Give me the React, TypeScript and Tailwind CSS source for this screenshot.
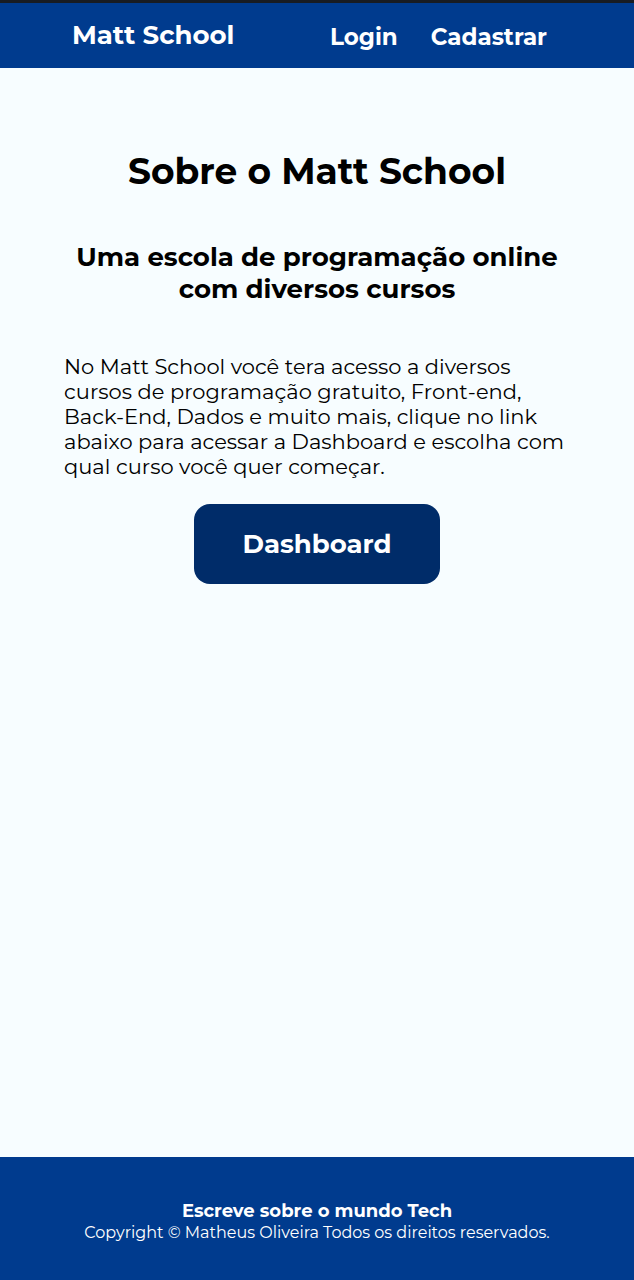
export default function App() {
  return (
    <div className="flex min-h-screen flex-col border-t-3 border-[#181c22] bg-[#f7fdff] font-[Montserrat,Inter,sans-serif] text-black">
      <header className="flex items-center justify-between bg-[#003b8e] py-4 pr-[87px] pl-[72px] font-bold text-white">
        <a href="#" className="text-[26px] leading-[33px]">Matt School</a>
        <nav className="flex gap-[33px] pt-1 text-[23px] leading-[29px]">
          <a href="#login">Login</a>
          <a href="#cadastrar">Cadastrar</a>
        </nav>
      </header>
      <main className="flex flex-1 flex-col items-center px-16 pt-20">
        <h1 className="text-center text-4xl leading-[46px] font-bold">Sobre o Matt School</h1>
        <h2 className="mt-[47px] text-center text-[26px] leading-8 font-bold">
          Uma escola de programação online
          <br />
          com diversos cursos
        </h2>
        <p className="mt-[49px] self-start text-[21px] leading-[25px]">
          No Matt School você tera acesso a diversos
          <br />
          cursos de programação gratuito, Front-end,
          <br />
          Back-End, Dados e muito mais, clique no link
          <br />
          abaixo para acessar a Dashboard e escolha com
          <br />
          qual curso você quer começar.
        </p>
        <a href="#dashboard" className="mt-[25px] rounded-2xl bg-[#002c69] px-12 py-6 text-[26px] leading-8 font-bold text-white">
          Dashboard
        </a>
      </main>
      <footer className="flex flex-col items-center bg-[#003b8e] px-4 pt-11 pb-[37px] text-center text-white">
        <p className="text-lg leading-[21px] font-bold">Escreve sobre o mundo Tech</p>
        <p className="text-base leading-[21px]">Copyright © Matheus Oliveira Todos os direitos reservados.</p>
      </footer>
    </div>
  );
}
